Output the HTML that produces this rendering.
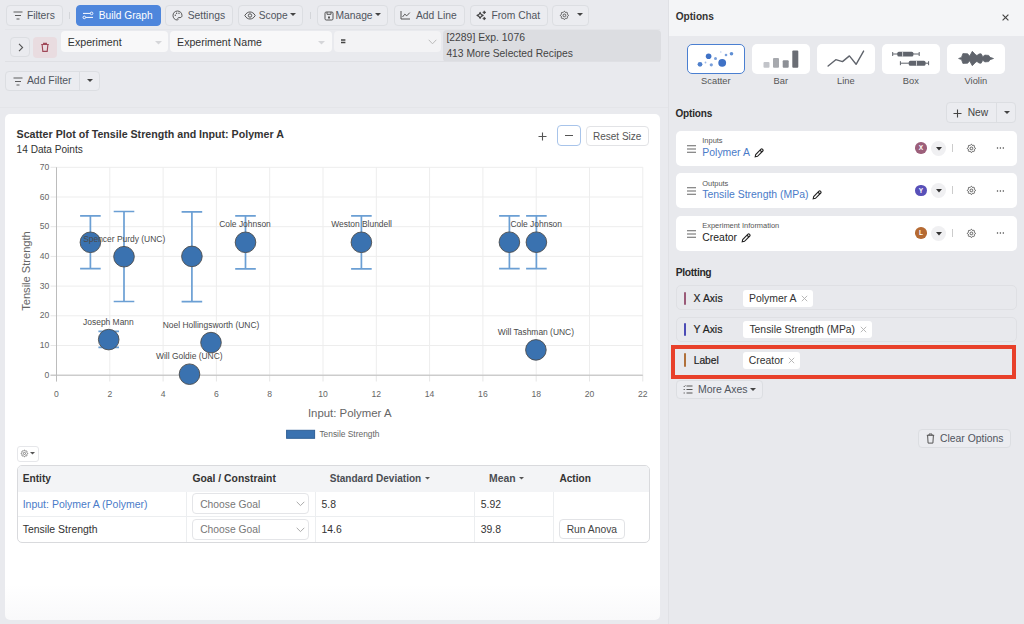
<!DOCTYPE html>
<html><head><meta charset="utf-8">
<style>
*{box-sizing:border-box;margin:0;padding:0}
html,body{width:1024px;height:624px;overflow:hidden}
body{background:#e9eaee;font-family:"Liberation Sans",sans-serif;color:#333;position:relative;font-size:10.3px}
.a{position:absolute}
.btn{position:absolute;border:1px solid #dcdee2;border-radius:4px;background:#ebecf0;color:#50555e;font-size:10.3px;line-height:1;white-space:nowrap}
.btn span{position:absolute;top:50%;transform:translateY(-50%)}
.sel{position:absolute;background:#f8f8f9;border-radius:4px;color:#333;font-size:10.6px;white-space:nowrap}
.t{position:absolute;white-space:nowrap;line-height:1}
svg{position:absolute;overflow:visible}
</style></head><body>

<!-- ===== TOOLBAR ===== -->
<div class="btn" style="left:5.5px;top:4.6px;width:57px;height:21px"></div>
<svg style="left:13px;top:11px" width="10" height="9" viewBox="0 0 10 9"><path d="M0.5 1h9M2 4.5h6M3.5 8h3" stroke="#555" stroke-width="0.95" fill="none"/></svg>
<div class="t" style="left:26.9px;top:10.5px;color:#50555e;font-size:10.3px">Filters</div>
<div class="a" style="left:69px;top:12px;width:1px;height:7px;background:#d3d5d9"></div>

<div class="btn" style="left:75.6px;top:4.6px;width:85.2px;height:21px;background:#4e86dc;border-color:#4e86dc"></div>
<svg style="left:82px;top:10px" width="12" height="10" viewBox="0 0 12 10"><path d="M1 3.4h8M3.5 7.4h7.5" stroke="#fff" stroke-width="1"/><circle cx="9.6" cy="3.4" r="1.3" fill="#4e86dc" stroke="#fff" stroke-width=".9"/><circle cx="2.3" cy="7.4" r="1.3" fill="#4e86dc" stroke="#fff" stroke-width=".9"/></svg>
<div class="t" style="left:98.8px;top:11px;color:#fff;font-size:10.2px">Build Graph</div>

<div class="btn" style="left:165px;top:4.6px;width:67.6px;height:21px"></div>
<svg style="left:172px;top:9.5px" width="11" height="11" viewBox="0 0 11 11"><path d="M5.5 1C2.8 1 1 3 1 5.5S2.8 10 5.2 10c.8 0 1-.6.7-1.1-.4-.6 0-1.3.7-1.3H8c1.3 0 2-.9 2-2C10 2.9 8 1 5.5 1z" fill="none" stroke="#555" stroke-width="1"/><circle cx="3.3" cy="5.3" r=".7" fill="#555"/><circle cx="4.6" cy="3.2" r=".7" fill="#555"/><circle cx="7" cy="3.3" r=".7" fill="#555"/></svg>
<div class="t" style="left:187.7px;top:10.5px;color:#50555e;font-size:10.35px">Settings</div>

<div class="btn" style="left:237.6px;top:4.6px;width:65.6px;height:21px"></div>
<svg style="left:244px;top:10.5px" width="12" height="9" viewBox="0 0 12 9"><path d="M0.8 4.5C2.2 2 4 1 6 1s3.8 1 5.2 3.5C9.8 7 8 8 6 8S2.2 7 .8 4.5z" fill="none" stroke="#555" stroke-width="1"/><circle cx="6" cy="4.5" r="1.7" fill="none" stroke="#555" stroke-width="1"/></svg>
<div class="t" style="left:258.8px;top:10.5px;color:#50555e;font-size:10.2px">Scope</div>
<svg style="left:290px;top:13px" width="6" height="4" viewBox="0 0 6 4"><path d="M0 0h6L3 3z" fill="#444"/></svg>
<div class="a" style="left:310px;top:12px;width:1px;height:7px;background:#d3d5d9"></div>

<div class="btn" style="left:316.6px;top:4.6px;width:71.4px;height:21px"></div>
<svg style="left:323.5px;top:10.5px" width="10" height="10" viewBox="0 0 10 10"><rect x="1" y="1" width="8" height="8" rx="1.2" fill="none" stroke="#555" stroke-width="1"/><path d="M3 1v2.3h4V1" fill="none" stroke="#555" stroke-width="1"/><rect x="4" y="5.5" width="2" height="2" fill="#555"/></svg>
<div class="t" style="left:335.4px;top:10.5px;color:#50555e;font-size:10.3px">Manage</div>
<svg style="left:375px;top:13px" width="6" height="4" viewBox="0 0 6 4"><path d="M0 0h6L3 3z" fill="#444"/></svg>

<div class="btn" style="left:393.5px;top:4.6px;width:71px;height:21px"></div>
<svg style="left:400px;top:10px" width="11" height="10" viewBox="0 0 11 10"><path d="M1 1v8h9" fill="none" stroke="#555" stroke-width="1"/><path d="M2.5 7l2.3-2.8 2 1.6L9.8 2.6" fill="none" stroke="#555" stroke-width="1"/></svg>
<div class="t" style="left:416px;top:10.5px;color:#50555e;font-size:10.3px">Add Line</div>

<div class="btn" style="left:469.6px;top:4.6px;width:78px;height:21px"></div>
<svg style="left:476px;top:10px" width="11" height="11" viewBox="0 0 11 11"><path d="M4.1 2.3Q4.6 4.9 7.2 5.4 4.6 5.9 4.1 8.5 3.6 5.9 1 5.4 3.6 4.9 4.1 2.3z" fill="none" stroke="#444" stroke-width="1.1" stroke-linejoin="round"/><path d="M8.3 .8Q8.5 2.2 9.9 2.4 8.5 2.6 8.3 4 8.1 2.6 6.7 2.4 8.1 2.2 8.3.8zM8.3 6.9Q8.5 8.3 9.9 8.5 8.5 8.7 8.3 10.1 8.1 8.7 6.7 8.5 8.1 8.3 8.3 6.9z" fill="#444" stroke="#444" stroke-width=".6" stroke-linejoin="round"/></svg>
<div class="t" style="left:491.4px;top:10.5px;color:#50555e;font-size:10.3px">From Chat</div>

<div class="btn" style="left:552px;top:4.6px;width:37.4px;height:21px"></div>
<svg style="left:558.5px;top:9.6px" width="11" height="11" viewBox="0 0 11 11"><g transform="scale(0.45)"><path d="M10.325 4.317c.426 -1.756 2.924 -1.756 3.35 0a1.724 1.724 0 0 0 2.573 1.066c1.543 -.94 3.31 .826 2.37 2.37a1.724 1.724 0 0 0 1.065 2.572c1.756 .426 1.756 2.924 0 3.35a1.724 1.724 0 0 0 -1.066 2.573c.94 1.543 -.826 3.31 -2.37 2.37a1.724 1.724 0 0 0 -2.572 1.065c-.426 1.756 -2.924 1.756 -3.35 0a1.724 1.724 0 0 0 -2.573 -1.066c-1.543 .94 -3.31 -.826 -2.37 -2.37a1.724 1.724 0 0 0 -1.065 -2.572c-1.756 -.426 -1.756 -2.924 0 -3.35a1.724 1.724 0 0 0 1.066 -2.573c-.94 -1.543 .826 -3.31 2.37 -2.37c1 .608 2.296 .07 2.572 -1.065z" fill="none" stroke="#555" stroke-width="2.1"/><circle cx="12" cy="12" r="3" fill="none" stroke="#555" stroke-width="2.1"/></g></svg>
<svg style="left:576.5px;top:13px" width="6" height="4" viewBox="0 0 6 4"><path d="M0 0h6L3 3z" fill="#444"/></svg>

<!-- ===== FILTER ROW ===== -->
<div class="a" style="left:5.3px;top:29px;width:655px;height:1px;background:#e4e5e9"></div>
<div class="btn" style="left:10.4px;top:37.2px;width:19.8px;height:20.1px;background:#eaebef"></div>
<svg style="left:17.8px;top:42.5px" width="6" height="9" viewBox="0 0 6 9"><path d="M1 .8l3.6 3.7L1 8.2" fill="none" stroke="#555" stroke-width="1.1"/></svg>
<div class="a" style="left:33.4px;top:36.8px;width:23.8px;height:20.8px;background:#e9dce0;border-radius:4px"></div>
<svg style="left:40px;top:41.5px" width="10" height="11" viewBox="0 0 10 11"><path d="M1.2 2.5h7.6M3.6 2.5V1.3h2.8v1.2M2.1 2.5l.7 6.9h4.4l.7-6.9" fill="none" stroke="#a04858" stroke-width="1.15"/></svg>

<div class="sel" style="left:61px;top:31.1px;width:107px;height:20.8px"></div>
<div class="t" style="left:67.8px;top:36.8px;font-size:10.65px;color:#333">Experiment</div>
<svg style="left:155px;top:40.5px" width="7" height="4" viewBox="0 0 7 4"><path d="M0 0h7L3.5 3.5z" fill="#d5d6d9"/></svg>

<div class="sel" style="left:170px;top:31.1px;width:162px;height:20.8px"></div>
<div class="t" style="left:177.1px;top:36.8px;font-size:10.6px;color:#333">Experiment Name</div>
<svg style="left:318px;top:40.5px" width="7" height="4" viewBox="0 0 7 4"><path d="M0 0h7L3.5 3.5z" fill="#d5d6d9"/></svg>

<div class="sel" style="left:334px;top:31.1px;width:107px;height:20.8px;background:#f3f3f5"></div>
<svg style="left:341.2px;top:38.8px" width="5" height="4.5" viewBox="0 0 5 4.5"><path d="M0 1h4.4M0 3.5h4.4" stroke="#444" stroke-width="1.3"/></svg>
<svg style="left:428px;top:39px" width="9" height="6" viewBox="0 0 9 6"><path d="M.7 .8L4.5 4.8 8.3.8" fill="none" stroke="#bbb" stroke-width="1"/></svg>

<div class="a" style="left:443px;top:30px;width:217.6px;height:31.5px;background:#dcdde1;border-radius:4px"></div>
<div class="t" style="left:446.4px;top:33px;font-size:10.4px;color:#444">[2289] Exp. 1076</div>
<div class="t" style="left:446.4px;top:48.5px;font-size:10.3px;color:#444">413 More Selected Recipes</div>

<div class="a" style="left:5.3px;top:61.3px;width:655px;height:1px;background:#dfe0e4"></div>

<div class="btn" style="left:5.4px;top:70.6px;width:94.2px;height:20.2px"></div>
<div class="a" style="left:79.4px;top:71px;width:1px;height:19.4px;background:#dcdee2"></div>
<svg style="left:12.5px;top:76.5px" width="10" height="9" viewBox="0 0 10 9"><path d="M0.5 1h9M2 4.5h6M3.5 8h3" stroke="#555" stroke-width="0.95" fill="none"/></svg>
<div class="t" style="left:26.9px;top:75.6px;font-size:10.45px;color:#50555e">Add Filter</div>
<svg style="left:86.5px;top:79px" width="6" height="4" viewBox="0 0 6 4"><path d="M0 0h6L3 3z" fill="#444"/></svg>

<div class="a" style="left:0;top:106.5px;width:668px;height:1px;background:#e4e5e9"></div>

<!-- ===== MAIN CARD ===== -->
<div class="a" style="left:5px;top:114.3px;width:655.3px;height:505.3px;background:linear-gradient(to bottom,#fff 0,#fff 93%,#f9f9fa 100%);border-radius:5px"></div>

<!-- CHART_HERE -->
<svg style="left:0;top:0" width="1024" height="624" viewBox="0 0 1024 624">
<path d="M56.5 167.3V375.2M109.8 167.3V375.2M163.1 167.3V375.2M216.4 167.3V375.2M269.7 167.3V375.2M323.0 167.3V375.2M376.3 167.3V375.2M429.6 167.3V375.2M482.9 167.3V375.2M536.2 167.3V375.2M589.5 167.3V375.2M642.8 167.3V375.2M56.5 375.2H642.8M56.5 345.5H642.8M56.5 315.8H642.8M56.5 286.1H642.8M56.5 256.4H642.8M56.5 226.7H642.8M56.5 197.0H642.8M56.5 167.3H642.8" stroke="#ededed" stroke-width="1" fill="none"/>
<path d="M56.5 375.2V381.5M109.8 375.2V381.5M163.1 375.2V381.5M216.4 375.2V381.5M269.7 375.2V381.5M323.0 375.2V381.5M376.3 375.2V381.5M429.6 375.2V381.5M482.9 375.2V381.5M536.2 375.2V381.5M589.5 375.2V381.5M642.8 375.2V381.5M50.5 375.2H56.5M50.5 345.5H56.5M50.5 315.8H56.5M50.5 286.1H56.5M50.5 256.4H56.5M50.5 226.7H56.5M50.5 197.0H56.5M50.5 167.3H56.5" stroke="#e6e6e6" stroke-width="1" fill="none"/>
<path d="M56.5 167.3V381.5M50.5 375.2H642.8" stroke="#bcbcbc" stroke-width="1" fill="none"/>
<g font-family="Liberation Sans" font-size="8.6" fill="#666"><text x="56.5" y="397.2" text-anchor="middle">0</text><text x="109.8" y="397.2" text-anchor="middle">2</text><text x="163.1" y="397.2" text-anchor="middle">4</text><text x="216.4" y="397.2" text-anchor="middle">6</text><text x="269.7" y="397.2" text-anchor="middle">8</text><text x="323.0" y="397.2" text-anchor="middle">10</text><text x="376.3" y="397.2" text-anchor="middle">12</text><text x="429.6" y="397.2" text-anchor="middle">14</text><text x="482.9" y="397.2" text-anchor="middle">16</text><text x="536.2" y="397.2" text-anchor="middle">18</text><text x="589.5" y="397.2" text-anchor="middle">20</text><text x="642.8" y="397.2" text-anchor="middle">22</text><text x="49.2" y="377.8" text-anchor="end">0</text><text x="49.2" y="348.1" text-anchor="end">10</text><text x="49.2" y="318.4" text-anchor="end">20</text><text x="49.2" y="288.7" text-anchor="end">30</text><text x="49.2" y="259.0" text-anchor="end">40</text><text x="49.2" y="229.3" text-anchor="end">50</text><text x="49.2" y="199.6" text-anchor="end">60</text><text x="49.2" y="169.9" text-anchor="end">70</text></g>
<text x="349.7" y="416.6" text-anchor="middle" font-family="Liberation Sans" font-size="11.4" fill="#666">Input: Polymer A</text>
<text transform="translate(30.3 271) rotate(-90)" text-anchor="middle" font-family="Liberation Sans" font-size="11.1" fill="#666">Tensile Strength</text>
<rect x="286.6" y="430.3" width="28" height="8" fill="#3a72b0" stroke="#2f5f96" stroke-width="1"/>
<text x="319.4" y="437.1" font-family="Liberation Sans" font-size="8.4" fill="#666">Tensile Strength</text>
<path d="M90.4 215.8V268.7M80.1 215.8H100.7M80.1 268.7H100.7M124.0 211.5V301.5M113.7 211.5H134.3M113.7 301.5H134.3M108.7 331.3V347.3M98.4 331.3H119.0M98.4 347.3H119.0M191.9 211.8V301.7M181.6 211.8H202.2M181.6 301.7H202.2M245.5 215.9V268.8M235.2 215.9H255.8M235.2 268.8H255.8M361.4 215.8V268.8M351.1 215.8H371.7M351.1 268.8H371.7M509.4 215.8V268.7M499.1 215.8H519.7M499.1 268.7H519.7M536.4 215.8V268.7M526.1 215.8H546.7M526.1 268.7H546.7" stroke="#6b9fd4" stroke-width="1.7" fill="none"/>
<circle cx="90.4" cy="242.3" r="10.3" fill="#3a72b0" stroke="#4d4d4d" stroke-width="0.9"/>
<circle cx="124.0" cy="256.7" r="10.3" fill="#3a72b0" stroke="#4d4d4d" stroke-width="0.9"/>
<circle cx="108.7" cy="339.6" r="10.3" fill="#3a72b0" stroke="#4d4d4d" stroke-width="0.9"/>
<circle cx="191.9" cy="256.4" r="10.3" fill="#3a72b0" stroke="#4d4d4d" stroke-width="0.9"/>
<circle cx="211.0" cy="342.6" r="10.3" fill="#3a72b0" stroke="#4d4d4d" stroke-width="0.9"/>
<circle cx="189.5" cy="374.2" r="10.3" fill="#3a72b0" stroke="#4d4d4d" stroke-width="0.9"/>
<circle cx="245.5" cy="242.3" r="10.3" fill="#3a72b0" stroke="#4d4d4d" stroke-width="0.9"/>
<circle cx="361.4" cy="242.3" r="10.3" fill="#3a72b0" stroke="#4d4d4d" stroke-width="0.9"/>
<circle cx="509.4" cy="242.2" r="10.3" fill="#3a72b0" stroke="#4d4d4d" stroke-width="0.9"/>
<circle cx="536.4" cy="242.2" r="10.3" fill="#3a72b0" stroke="#4d4d4d" stroke-width="0.9"/>
<circle cx="535.9" cy="349.9" r="10.3" fill="#3a72b0" stroke="#4d4d4d" stroke-width="0.9"/>
<g font-family="Liberation Sans" font-size="8.45" fill="#4a4a4a"><text x="124.2" y="241.7" text-anchor="middle">Spencer Purdy (UNC)</text><text x="108.4" y="324.6" text-anchor="middle">Joseph Mann</text><text x="211.0" y="327.6" text-anchor="middle">Noel Hollingsworth (UNC)</text><text x="189.3" y="359.2" text-anchor="middle">Will Goldie (UNC)</text><text x="245.0" y="227.3" text-anchor="middle">Cole Johnson</text><text x="361.6" y="227.3" text-anchor="middle">Weston Blundell</text><text x="536.2" y="227.2" text-anchor="middle">Cole Johnson</text><text x="535.9" y="334.9" text-anchor="middle">Will Tashman (UNC)</text></g>
</svg>
<!-- TABLE_HERE -->
<div class="t" style="left:16.6px;top:128.6px;font-size:10.65px;font-weight:bold;color:#333">Scatter Plot of Tensile Strength and Input: Polymer A</div>
<div class="t" style="left:16.6px;top:144.6px;font-size:10.1px;color:#333">14 Data Points</div>
<svg style="left:537.5px;top:131.5px" width="9" height="9" viewBox="0 0 9 9"><path d="M4.5 .5v8M.5 4.5h8" stroke="#555" stroke-width="1.1"/></svg>
<div class="a" style="left:557.4px;top:125.3px;width:23.4px;height:21.2px;border:1px solid #a8c4ea;border-radius:4px;background:#fff"></div>
<div class="a" style="left:565px;top:135px;width:8px;height:1px;background:#555"></div>
<div class="a" style="left:585.5px;top:125.5px;width:63px;height:20.8px;border:1px solid #e2e3e6;border-radius:4px;background:#fff"></div>
<div class="t" style="left:593px;top:131.6px;font-size:10px;color:#555">Reset Size</div>

<div class="a" style="left:16.5px;top:445.6px;width:22px;height:16px;border:1px solid #e6e7ea;border-radius:3px;background:#fff"></div>
<svg style="left:20.3px;top:449.3px" width="8.6" height="8.6" viewBox="0 0 10 10"><g transform="scale(0.43)"><path d="M10.325 4.317c.426 -1.756 2.924 -1.756 3.35 0a1.724 1.724 0 0 0 2.573 1.066c1.543 -.94 3.31 .826 2.37 2.37a1.724 1.724 0 0 0 1.065 2.572c1.756 .426 1.756 2.924 0 3.35a1.724 1.724 0 0 0 -1.066 2.573c.94 1.543 -.826 3.31 -2.37 2.37a1.724 1.724 0 0 0 -2.572 1.065c-.426 1.756 -2.924 1.756 -3.35 0a1.724 1.724 0 0 0 -2.573 -1.066c-1.543 .94 -3.31 -.826 -2.37 -2.37a1.724 1.724 0 0 0 -1.065 -2.572c-1.756 -.426 -1.756 -2.924 0 -3.35a1.724 1.724 0 0 0 1.066 -2.573c-.94 -1.543 .826 -3.31 2.37 -2.37c1 .608 2.296 .07 2.572 -1.065z" fill="none" stroke="#555" stroke-width="1.8"/><circle cx="12" cy="12" r="3" fill="none" stroke="#555" stroke-width="1.8"/></g></svg>
<svg style="left:30.3px;top:452px" width="5" height="3" viewBox="0 0 5 3"><path d="M0 0h5L2.5 2.5z" fill="#555"/></svg>

<div class="a" style="left:16.5px;top:465px;width:633px;height:77.8px;border:1px solid #d9dadd;border-radius:5px;background:#fff;overflow:hidden">
  <div class="a" style="left:0;top:0;width:633px;height:25.5px;background:#f3f4f6"></div>
  <div class="a" style="left:0;top:50px;width:536px;height:1px;background:#eceef0"></div>
  <div class="a" style="left:168.7px;top:25.5px;width:1px;height:51px;background:#eceef0"></div>
  <div class="a" style="left:297.5px;top:25.5px;width:1px;height:51px;background:#eceef0"></div>
  <div class="a" style="left:456.4px;top:25.5px;width:1px;height:51px;background:#eceef0"></div>
  <div class="a" style="left:535.4px;top:25.5px;width:1px;height:51px;background:#eceef0"></div>
</div>
<div class="t" style="left:22.7px;top:474px;font-size:10.2px;font-weight:bold;color:#333">Entity</div>
<div class="t" style="left:192.5px;top:474px;font-size:10.35px;font-weight:bold;color:#333">Goal / Constraint</div>
<div class="t" style="left:329.7px;top:473.5px;font-size:10.05px;font-weight:bold;color:#4a4d53">Standard Deviation</div>
<svg style="left:424.5px;top:476.5px" width="5" height="3" viewBox="0 0 5 3"><path d="M0 0h5L2.5 2.5z" fill="#555"/></svg>
<div class="t" style="left:489px;top:473.5px;font-size:10.4px;font-weight:bold;color:#4a4d53">Mean</div>
<svg style="left:518.5px;top:476.5px" width="5" height="3" viewBox="0 0 5 3"><path d="M0 0h5L2.5 2.5z" fill="#555"/></svg>
<div class="t" style="left:559.4px;top:474px;font-size:10.15px;font-weight:bold;color:#333">Action</div>

<div class="t" style="left:22.7px;top:498.5px;font-size:10.5px;color:#4a7bc8">Input: Polymer A (Polymer)</div>
<div class="t" style="left:22.7px;top:524.5px;font-size:10.45px;color:#333">Tensile Strength</div>

<div class="a" style="left:192.3px;top:493.3px;width:117px;height:21px;border:1px solid #e4e5e8;border-radius:4px;background:#fff"></div>
<div class="t" style="left:200.2px;top:499.6px;font-size:10.3px;color:#777">Choose Goal</div>
<svg style="left:295.5px;top:501px" width="9" height="6" viewBox="0 0 9 6"><path d="M.7 .8L4.5 4.6 8.3.8" fill="none" stroke="#aaa" stroke-width="1"/></svg>
<div class="a" style="left:192.3px;top:518.8px;width:117px;height:21px;border:1px solid #e4e5e8;border-radius:4px;background:#fff"></div>
<div class="t" style="left:200.2px;top:525px;font-size:10.3px;color:#777">Choose Goal</div>
<svg style="left:295.5px;top:526.5px" width="9" height="6" viewBox="0 0 9 6"><path d="M.7 .8L4.5 4.6 8.3.8" fill="none" stroke="#aaa" stroke-width="1"/></svg>

<div class="t" style="left:321.5px;top:499.5px;font-size:10.4px;color:#333">5.8</div>
<div class="t" style="left:321.5px;top:524.5px;font-size:10.4px;color:#333">14.6</div>
<div class="t" style="left:480.8px;top:499.5px;font-size:10.4px;color:#333">5.92</div>
<div class="t" style="left:480.8px;top:524.5px;font-size:10.4px;color:#333">39.8</div>
<div class="a" style="left:559.4px;top:518.8px;width:65.3px;height:20.4px;border:1px solid #e2e3e6;border-radius:4px;background:#fff"></div>
<div class="t" style="left:566.7px;top:524.5px;font-size:10.3px;color:#444">Run Anova</div>

<!-- ===== RIGHT PANEL ===== -->
<div class="a" style="left:668px;top:0;width:356px;height:624px;background:#e8e9ed;border-left:1px solid #e0e1e5"></div>
<div class="a" style="left:669px;top:0;width:355px;height:35.6px;background:#f4f5f7"></div>
<div class="t" style="left:675.7px;top:12px;font-size:10.15px;font-weight:bold;color:#333">Options</div>
<svg style="left:1002.4px;top:13.8px" width="7" height="7" viewBox="0 0 7 7"><path d="M.6 .6l5.8 5.8M6.4 .6L.6 6.4" stroke="#444" stroke-width="1.15"/></svg>

<!-- RIGHT_HERE -->
<div class="a" style="left:687px;top:43.9px;width:57.9px;height:30px;background:#fff;border:1.7px solid #4a7fd1;border-radius:5px"></div>
<svg style="left:687px;top:43.9px" width="58" height="30" viewBox="0 0 58 30">
<circle cx="35.2" cy="18.8" r="3.9" fill="#3f72c6"/><circle cx="21.6" cy="12.2" r="2.8" fill="#3f72c6"/><circle cx="13" cy="20.3" r="2.4" fill="#4f80cc"/><circle cx="24.3" cy="20.8" r="1.6" fill="#7aa0dc"/><circle cx="28.5" cy="14.6" r="1.5" fill="#7aa0dc"/><circle cx="39" cy="11" r="1.3" fill="#7aa0dc"/><circle cx="44.5" cy="9.7" r="1.8" fill="#5f8fd4"/><circle cx="18.5" cy="18.5" r="0.9" fill="#9bb8e6"/><circle cx="33.8" cy="8" r="0.8" fill="#b9cdef"/>
</svg>
<div class="a" style="left:752px;top:43.9px;width:57.7px;height:30px;background:#fff;border-radius:5px"></div>
<svg style="left:752px;top:43.9px" width="58" height="30" viewBox="0 0 58 30">
<rect x="11.5" y="18" width="6" height="5.8" rx="1" fill="#c2c4c9"/><rect x="21" y="14" width="6" height="9.8" rx="1" fill="#a7a9ae"/><rect x="30.7" y="16.3" width="6" height="7.5" rx="1" fill="#8c8f95"/><rect x="40.3" y="6.6" width="6" height="17.2" rx="1" fill="#6a6d74"/>
</svg>
<div class="a" style="left:817px;top:43.9px;width:57.7px;height:30px;background:#fff;border-radius:5px"></div>
<svg style="left:817px;top:43.9px" width="58" height="30" viewBox="0 0 58 30">
<path d="M11.1 22L18.8 15.7 25.5 17.6 32.4 11.9 39.1 20.3 46.6 7.1" fill="none" stroke="#60646c" stroke-width="1.4" stroke-linejoin="round" stroke-linecap="round"/>
</svg>
<div class="a" style="left:882px;top:43.9px;width:57.7px;height:30px;background:#fff;border-radius:5px"></div>
<svg style="left:882px;top:43.9px" width="58" height="30" viewBox="0 0 58 30">
<path d="M10.7 8v4M10.7 10H37.2M37.2 8v4M18.4 17.2v4M18.4 19.2H46.6M46.6 17.2v4" stroke="#60646c" stroke-width="1" fill="none"/>
<rect x="15.3" y="7.8" width="16.1" height="4.8" rx="1.5" fill="#60646c"/><path d="M20.6 7.8v4.8" stroke="#fff" stroke-width=".7"/>
<rect x="26.8" y="16.8" width="16.7" height="4.9" rx="1.5" fill="#60646c"/><path d="M34.5 16.8v4.9" stroke="#fff" stroke-width=".7"/>
</svg>
<div class="a" style="left:947px;top:43.9px;width:57.7px;height:30px;background:#fff;border-radius:5px"></div>
<svg style="left:947px;top:43.9px" width="58" height="30" viewBox="0 0 58 30">
<path d="M11.6 14.5 L14.5 13.4 L15.9 9.6 L20.7 9.8 L22.6 12.2 L25.3 7.3 L28.2 10.3 L29.9 11.6 L32.0 10.0 L34.1 9.8 L35.8 12.7 L37.9 11.1 L41.7 11.4 L43.0 13.3 L46.5 14.5 L43.0 15.7 L41.7 17.6 L37.9 17.9 L35.8 16.3 L34.1 19.2 L32.0 19.0 L29.9 17.4 L28.2 18.7 L25.3 21.7 L22.6 16.8 L20.7 19.2 L15.9 19.4 L14.5 15.6Z" fill="#60646c" stroke="#60646c" stroke-width="0.8" stroke-linejoin="round"/>
</svg>
<div class="t" style="left:687px;top:77.3px;width:57.7px;text-align:center;font-size:9.3px;color:#555">Scatter</div>
<div class="t" style="left:752px;top:77.3px;width:57.7px;text-align:center;font-size:9.3px;color:#555">Bar</div>
<div class="t" style="left:817px;top:77.3px;width:57.7px;text-align:center;font-size:9.3px;color:#555">Line</div>
<div class="t" style="left:882px;top:77.3px;width:57.7px;text-align:center;font-size:9.3px;color:#555">Box</div>
<div class="t" style="left:947px;top:77.3px;width:57.7px;text-align:center;font-size:9.3px;color:#555">Violin</div>

<div class="t" style="left:675.4px;top:108.6px;font-size:10px;letter-spacing:-0.15px;font-weight:bold;color:#2a2a2a">Options</div>
<div class="btn" style="left:946.4px;top:102.4px;width:70px;height:20.2px"></div>
<div class="a" style="left:996.2px;top:103px;width:1px;height:19px;background:#dcdee2"></div>
<svg style="left:953px;top:108.5px" width="9" height="9" viewBox="0 0 9 9"><path d="M4.5 .5v8M.5 4.5h8" stroke="#444" stroke-width="1.1"/></svg>
<div class="t" style="left:967.7px;top:107.8px;font-size:10.25px;color:#444">New</div>
<svg style="left:1003.5px;top:111px" width="6" height="4" viewBox="0 0 6 4"><path d="M0 0h6L3 3z" fill="#444"/></svg>
<div class="a" style="left:675.5px;top:130.5px;width:341px;height:35px;background:#fff;border-radius:5px"></div>
<svg style="left:687px;top:144.5px" width="9" height="8" viewBox="0 0 9 8"><path d="M0 .8h9M0 4h9M0 7.2h9" stroke="#666" stroke-width="1.1"/></svg>
<div class="t" style="left:702.3px;top:137.0px;font-size:7.45px;color:#555">Inputs</div>
<div class="t" style="left:702.3px;top:147.5px;font-size:10.45px;color:#4a7bc8">Polymer A</div>
<svg style="left:754.0999999999999px;top:147.5px" width="10" height="10" viewBox="0 0 10 10"><path d="M1.2 8.8l.5-2.3L7 1.2a1 1 0 0 1 1.4 0l.4.4a1 1 0 0 1 0 1.4L3.5 8.3z" fill="none" stroke="#222" stroke-width="1.1"/><path d="M6 2.2l1.8 1.8" stroke="#222" stroke-width="1.1"/></svg>
<div class="a" style="left:915.2px;top:142.3px;width:11.5px;height:11.5px;border-radius:50%;background:#9c5f7a"></div>
<div class="t" style="left:915.2px;top:145.0px;width:11.5px;text-align:center;font-size:6.5px;color:#fff;font-weight:bold">X</div>
<div class="a" style="left:931px;top:140.5px;width:15px;height:15px;border-radius:50%;background:#f0f0f2"></div>
<svg style="left:935.5px;top:146.5px" width="6" height="4" viewBox="0 0 6 4"><path d="M0 0h6L3 3.5z" fill="#333"/></svg>
<div class="a" style="left:952.3px;top:143.8px;width:1px;height:8px;background:#ccc"></div>
<svg style="left:966.1px;top:142.5px" width="11" height="11" viewBox="0 0 11 11"><g transform="scale(0.45)"><path d="M10.325 4.317c.426 -1.756 2.924 -1.756 3.35 0a1.724 1.724 0 0 0 2.573 1.066c1.543 -.94 3.31 .826 2.37 2.37a1.724 1.724 0 0 0 1.065 2.572c1.756 .426 1.756 2.924 0 3.35a1.724 1.724 0 0 0 -1.066 2.573c.94 1.543 -.826 3.31 -2.37 2.37a1.724 1.724 0 0 0 -2.572 1.065c-.426 1.756 -2.924 1.756 -3.35 0a1.724 1.724 0 0 0 -2.573 -1.066c-1.543 .94 -3.31 -.826 -2.37 -2.37a1.724 1.724 0 0 0 -1.065 -2.572c-1.756 -.426 -1.756 -2.924 0 -3.35a1.724 1.724 0 0 0 1.066 -2.573c-.94 -1.543 .826 -3.31 2.37 -2.37c1 .608 2.296 .07 2.572 -1.065z" fill="none" stroke="#555" stroke-width="2.1"/><circle cx="12" cy="12" r="3" fill="none" stroke="#555" stroke-width="2.1"/></g></svg>
<svg style="left:995.5px;top:147.0px" width="9" height="2" viewBox="0 0 9 2"><circle cx="1.5" cy="1" r=".75" fill="#444"/><circle cx="4.4" cy="1" r=".75" fill="#444"/><circle cx="7.3" cy="1" r=".75" fill="#444"/></svg>
<div class="a" style="left:675.5px;top:173px;width:341px;height:35px;background:#fff;border-radius:5px"></div>
<svg style="left:687px;top:187px" width="9" height="8" viewBox="0 0 9 8"><path d="M0 .8h9M0 4h9M0 7.2h9" stroke="#666" stroke-width="1.1"/></svg>
<div class="t" style="left:702.3px;top:179.5px;font-size:7.45px;color:#555">Outputs</div>
<div class="t" style="left:702.3px;top:190px;font-size:10.45px;color:#4a7bc8">Tensile Strength (MPa)</div>
<svg style="left:812.0999999999999px;top:190px" width="10" height="10" viewBox="0 0 10 10"><path d="M1.2 8.8l.5-2.3L7 1.2a1 1 0 0 1 1.4 0l.4.4a1 1 0 0 1 0 1.4L3.5 8.3z" fill="none" stroke="#222" stroke-width="1.1"/><path d="M6 2.2l1.8 1.8" stroke="#222" stroke-width="1.1"/></svg>
<div class="a" style="left:915.2px;top:184.8px;width:11.5px;height:11.5px;border-radius:50%;background:#5850b8"></div>
<div class="t" style="left:915.2px;top:187.5px;width:11.5px;text-align:center;font-size:6.5px;color:#fff;font-weight:bold">Y</div>
<div class="a" style="left:931px;top:183px;width:15px;height:15px;border-radius:50%;background:#f0f0f2"></div>
<svg style="left:935.5px;top:189px" width="6" height="4" viewBox="0 0 6 4"><path d="M0 0h6L3 3.5z" fill="#333"/></svg>
<div class="a" style="left:952.3px;top:186.3px;width:1px;height:8px;background:#ccc"></div>
<svg style="left:966.1px;top:185.0px" width="11" height="11" viewBox="0 0 11 11"><g transform="scale(0.45)"><path d="M10.325 4.317c.426 -1.756 2.924 -1.756 3.35 0a1.724 1.724 0 0 0 2.573 1.066c1.543 -.94 3.31 .826 2.37 2.37a1.724 1.724 0 0 0 1.065 2.572c1.756 .426 1.756 2.924 0 3.35a1.724 1.724 0 0 0 -1.066 2.573c.94 1.543 -.826 3.31 -2.37 2.37a1.724 1.724 0 0 0 -2.572 1.065c-.426 1.756 -2.924 1.756 -3.35 0a1.724 1.724 0 0 0 -2.573 -1.066c-1.543 .94 -3.31 -.826 -2.37 -2.37a1.724 1.724 0 0 0 -1.065 -2.572c-1.756 -.426 -1.756 -2.924 0 -3.35a1.724 1.724 0 0 0 1.066 -2.573c-.94 -1.543 .826 -3.31 2.37 -2.37c1 .608 2.296 .07 2.572 -1.065z" fill="none" stroke="#555" stroke-width="2.1"/><circle cx="12" cy="12" r="3" fill="none" stroke="#555" stroke-width="2.1"/></g></svg>
<svg style="left:995.5px;top:189.5px" width="9" height="2" viewBox="0 0 9 2"><circle cx="1.5" cy="1" r=".75" fill="#444"/><circle cx="4.4" cy="1" r=".75" fill="#444"/><circle cx="7.3" cy="1" r=".75" fill="#444"/></svg>
<div class="a" style="left:675.5px;top:215.5px;width:341px;height:35px;background:#fff;border-radius:5px"></div>
<svg style="left:687px;top:229.5px" width="9" height="8" viewBox="0 0 9 8"><path d="M0 .8h9M0 4h9M0 7.2h9" stroke="#666" stroke-width="1.1"/></svg>
<div class="t" style="left:702.3px;top:222.0px;font-size:7.45px;color:#555">Experiment Information</div>
<div class="t" style="left:702.3px;top:232.5px;font-size:10.45px;color:#222">Creator</div>
<svg style="left:740.5999999999999px;top:232.5px" width="10" height="10" viewBox="0 0 10 10"><path d="M1.2 8.8l.5-2.3L7 1.2a1 1 0 0 1 1.4 0l.4.4a1 1 0 0 1 0 1.4L3.5 8.3z" fill="none" stroke="#222" stroke-width="1.1"/><path d="M6 2.2l1.8 1.8" stroke="#222" stroke-width="1.1"/></svg>
<div class="a" style="left:915.2px;top:227.3px;width:11.5px;height:11.5px;border-radius:50%;background:#b56a32"></div>
<div class="t" style="left:915.2px;top:230.0px;width:11.5px;text-align:center;font-size:6.5px;color:#fff;font-weight:bold">L</div>
<div class="a" style="left:931px;top:225.5px;width:15px;height:15px;border-radius:50%;background:#f0f0f2"></div>
<svg style="left:935.5px;top:231.5px" width="6" height="4" viewBox="0 0 6 4"><path d="M0 0h6L3 3.5z" fill="#333"/></svg>
<div class="a" style="left:952.3px;top:228.8px;width:1px;height:8px;background:#ccc"></div>
<svg style="left:966.1px;top:227.5px" width="11" height="11" viewBox="0 0 11 11"><g transform="scale(0.45)"><path d="M10.325 4.317c.426 -1.756 2.924 -1.756 3.35 0a1.724 1.724 0 0 0 2.573 1.066c1.543 -.94 3.31 .826 2.37 2.37a1.724 1.724 0 0 0 1.065 2.572c1.756 .426 1.756 2.924 0 3.35a1.724 1.724 0 0 0 -1.066 2.573c.94 1.543 -.826 3.31 -2.37 2.37a1.724 1.724 0 0 0 -2.572 1.065c-.426 1.756 -2.924 1.756 -3.35 0a1.724 1.724 0 0 0 -2.573 -1.066c-1.543 .94 -3.31 -.826 -2.37 -2.37a1.724 1.724 0 0 0 -1.065 -2.572c-1.756 -.426 -1.756 -2.924 0 -3.35a1.724 1.724 0 0 0 1.066 -2.573c-.94 -1.543 .826 -3.31 2.37 -2.37c1 .608 2.296 .07 2.572 -1.065z" fill="none" stroke="#555" stroke-width="2.1"/><circle cx="12" cy="12" r="3" fill="none" stroke="#555" stroke-width="2.1"/></g></svg>
<svg style="left:995.5px;top:232.0px" width="9" height="2" viewBox="0 0 9 2"><circle cx="1.5" cy="1" r=".75" fill="#444"/><circle cx="4.4" cy="1" r=".75" fill="#444"/><circle cx="7.3" cy="1" r=".75" fill="#444"/></svg>

<div class="t" style="left:675.8px;top:268px;font-size:10.3px;letter-spacing:-0.35px;font-weight:bold;color:#2a2a2a">Plotting</div>

<div class="a" style="left:675.6px;top:285.4px;width:341px;height:25px;border:1px solid #dfe0e4;border-radius:5px"></div>
<div class="a" style="left:684.2px;top:291.5px;width:2px;height:13.3px;background:#9a5a78;border-radius:1px"></div>
<div class="t" style="left:693.6px;top:293.7px;font-size:10.45px;color:#222;-webkit-text-stroke:0.18px #222">X Axis</div>
<div class="a" style="left:743.3px;top:290.3px;width:69.7px;height:16.4px;background:#fff;border-radius:3px"></div>
<div class="t" style="left:749px;top:294.2px;font-size:10.45px;color:#333">Polymer A</div>
<svg style="left:801px;top:295px" width="7" height="7" viewBox="0 0 7 7"><path d="M.8 .8l5.4 5.4M6.2 .8L.8 6.2" stroke="#b0b0b0" stroke-width=".9"/></svg>

<div class="a" style="left:675.6px;top:316.5px;width:341px;height:25px;border:1px solid #dfe0e4;border-radius:5px"></div>
<div class="a" style="left:684.2px;top:322.5px;width:2px;height:13.3px;background:#4b4bb5;border-radius:1px"></div>
<div class="t" style="left:693.6px;top:324.7px;font-size:10.45px;color:#222;-webkit-text-stroke:0.18px #222">Y Axis</div>
<div class="a" style="left:743.3px;top:321px;width:128.7px;height:17px;background:#fff;border-radius:3px"></div>
<div class="t" style="left:749.4px;top:325.2px;font-size:10.4px;color:#333">Tensile Strength (MPa)</div>
<svg style="left:859.5px;top:326px" width="7" height="7" viewBox="0 0 7 7"><path d="M.8 .8l5.4 5.4M6.2 .8L.8 6.2" stroke="#b0b0b0" stroke-width=".9"/></svg>

<div class="a" style="left:671px;top:344.6px;width:344.5px;height:34.2px;border:4.8px solid #e8402a"></div>
<div class="a" style="left:684px;top:353.4px;width:2px;height:14px;background:#b0703a;border-radius:1px"></div>
<div class="t" style="left:693.7px;top:356.2px;font-size:10.25px;color:#222;-webkit-text-stroke:0.18px #222">Label</div>
<div class="a" style="left:743.2px;top:352.2px;width:56.8px;height:16.4px;background:#fff;border-radius:3px"></div>
<div class="t" style="left:748.8px;top:356.4px;font-size:10.4px;color:#333">Creator</div>
<svg style="left:787.5px;top:357px" width="7" height="7" viewBox="0 0 7 7"><path d="M.8 .8l5.4 5.4M6.2 .8L.8 6.2" stroke="#b0b0b0" stroke-width=".9"/></svg>

<div class="btn" style="left:676px;top:379.5px;width:87.2px;height:19.5px"></div>
<svg style="left:683px;top:384.5px" width="10" height="9" viewBox="0 0 10 9"><path d="M3.5 1h6M3.5 4.5h6M3.5 8h6" stroke="#555" stroke-width="1"/><path d="M.5 1l.8.8L2.5.3M.5 4.5h1.5M.5 8h1.5" stroke="#555" stroke-width=".8" fill="none"/></svg>
<div class="t" style="left:698px;top:384px;font-size:10.5px;color:#50555e">More Axes</div>
<svg style="left:750px;top:387.5px" width="6" height="4" viewBox="0 0 6 4"><path d="M0 0h6L3 3z" fill="#444"/></svg>

<div class="btn" style="left:918.4px;top:428.7px;width:92.3px;height:19.8px"></div>
<svg style="left:925.5px;top:433px" width="9" height="11" viewBox="0 0 9 11"><path d="M.8 2.3h7.4M3 2.3V1h3v1.3M1.6 2.3l.5 7.8h4.8l.5-7.8" fill="none" stroke="#555" stroke-width="1"/></svg>
<div class="t" style="left:940px;top:433.5px;font-size:10.4px;color:#50555e">Clear Options</div>

</body></html>
